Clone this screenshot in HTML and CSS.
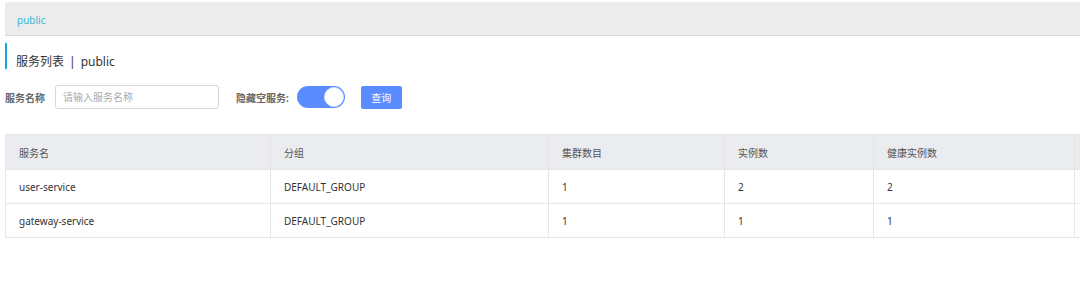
FILE: index.html
```html
<!DOCTYPE html>
<html lang="zh">
<head>
<meta charset="utf-8">
<title>服务列表</title>
<link rel="stylesheet" href="styles.css">
</head>
<body>
<div class="page">
  <div class="crumb"><span class="crumb-link">public</span></div>
  <div class="title">
    <span class="title-bar"></span>
    <span class="title-text">服务列表<span class="sep">|</span>public</span>
  </div>
  <div class="filters">
    <span class="label">服务名称</span>
    <input class="search" type="text" placeholder="请输入服务名称">
    <span class="label label-hide">隐藏空服务:</span>
    <span class="switch"><span class="knob"></span></span>
    <button class="btn">查询</button>
  </div>
  <div class="table-wrap">
    <table class="grid">
      <colgroup>
        <col class="c1"><col class="c2"><col class="c3"><col class="c4"><col class="c5"><col class="c6">
      </colgroup>
      <thead>
        <tr><th>服务名</th><th>分组</th><th>集群数目</th><th>实例数</th><th>健康实例数</th><th></th></tr>
      </thead>
      <tbody>
        <tr><td>user-service</td><td>DEFAULT_GROUP</td><td>1</td><td>2</td><td>2</td><td></td></tr>
        <tr><td>gateway-service</td><td>DEFAULT_GROUP</td><td>1</td><td>1</td><td>1</td><td></td></tr>
      </tbody>
    </table>
  </div>
</div>
</body>
</html>
```

FILE: styles.css
```css
html, body {
  margin: 0;
  padding: 0;
  background: #fff;
  overflow: hidden;
}
body {
  font-family: "Noto Sans", "Noto Sans CJK SC", sans-serif;
  color: #333;
  width: 1080px;
  height: 296px;
}
.page {
  padding: 2px 0 0 5px;
}
.crumb {
  height: 34px;
  background: #ececec;
  border-bottom: 1px solid #dcdcdc;
  display: flex;
  align-items: center;
  padding-left: 12px;
  padding-top: 2px;
  box-sizing: border-box;
  margin-right: -20px;
}
.crumb-link {
  color: #39b8d6;
  font-size: 10px;
}
.title {
  display: flex;
  align-items: center;
  margin-top: 7px;
  height: 26px;
}
.title-bar {
  width: 2px;
  height: 26px;
  background: #1ba4d8;
}
.title-text {
  margin-left: 9px;
  font-size: 12px;
  color: #333;
  padding-top: 9px;
}
.sep {
  margin: 0 5px;
}
.filters {
  display: flex;
  align-items: center;
  margin-top: 16px;
  height: 24px;
}
.label {
  font-size: 10px;
  font-weight: bold;
  color: #666;
}
.search {
  margin-left: 10px;
  width: 164px;
  height: 24px;
  box-sizing: border-box;
  border: 1px solid #d6d6d6;
  border-radius: 3px;
  padding: 0 7px;
  font-family: inherit;
  font-size: 10px;
  color: #333;
  outline: none;
}
.search::placeholder {
  color: #aaa;
}
.label-hide {
  margin-left: 17px;
}
.switch {
  margin-left: 8px;
  width: 48px;
  height: 22px;
  border-radius: 11px;
  background: #5a8cff;
  display: flex;
  align-items: center;
  justify-content: flex-end;
  box-sizing: border-box;
  padding-right: 1px;
}
.knob {
  width: 20px;
  height: 20px;
  border-radius: 50%;
  background: #fff;
  box-sizing: border-box;
  border: 1px solid #e0e6f5;
}
.btn {
  margin-left: 16px;
  width: 41px;
  height: 23px;
  border: none;
  border-radius: 2px;
  background: #5a8cff;
  color: #fff;
  font-family: inherit;
  font-size: 10px;
  padding: 0;
}
.table-wrap {
  margin-top: 25px;
  width: 1200px;
}
.grid {
  border-collapse: collapse;
  table-layout: fixed;
  width: 1200px;
  font-size: 10px;
}
.c1 { width: 265px; }
.c2 { width: 278px; }
.c3 { width: 176px; }
.c4 { width: 149px; }
.c5 { width: 201px; }
.c6 { width: 131px; }
.grid th, .grid td {
  border: 1px solid #e6e6e6;
  text-align: left;
  padding: 0 0 0 13px;
  white-space: nowrap;
  overflow: hidden;
}
.grid th {
  height: 34px;
  background: #ebecf0;
  font-weight: normal;
  color: #555;
}
.grid td {
  height: 33px;
  color: #333;
}
```
